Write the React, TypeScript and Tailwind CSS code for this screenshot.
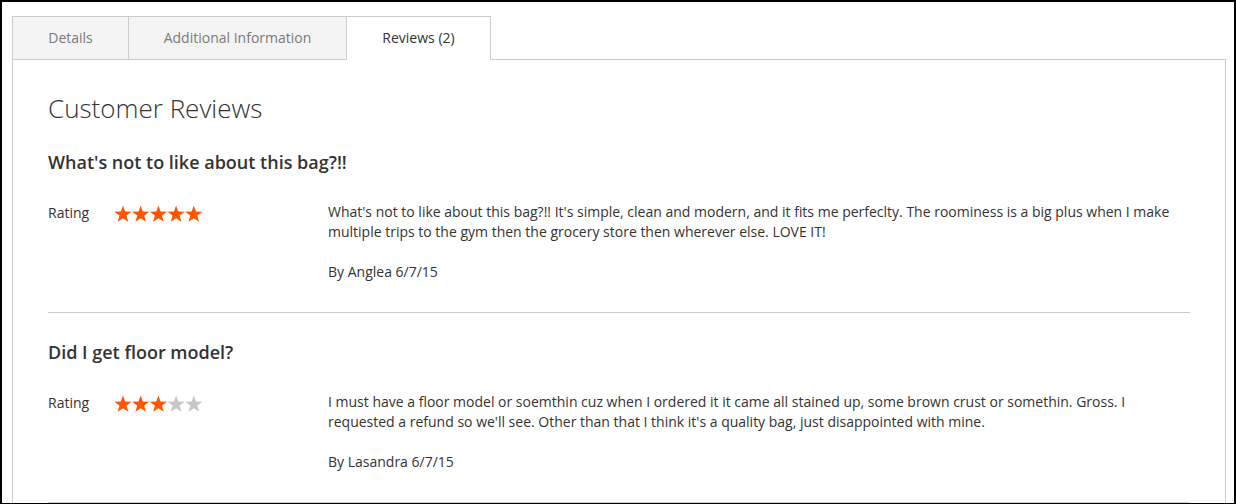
const font = "font-['Open_Sans','Liberation_Sans',sans-serif]";

const tabs = [
  { label: "Details", width: "w-[117px]", active: false },
  { label: "Additional Information", width: "w-[219px]", active: false },
  { label: "Reviews (2)", width: "w-[145px]", active: true },
];

const reviews = [
  {
    title: "What's not to like about this bag?!!",
    rating: 5,
    text: "What's not to like about this bag?!! It's simple, clean and modern, and it fits me perfeclty. The roominess is a big plus when I make multiple trips to the gym then the grocery store then wherever else. LOVE IT!",
    by: "By Anglea 6/7/15",
  },
  {
    title: "Did I get floor model?",
    rating: 3,
    text: "I must have a floor model or soemthin cuz when I ordered it it came all stained up, some brown crust or somethin. Gross. I requested a refund so we'll see. Other than that I think it's a quality bag, just disappointed with mine.",
    by: "By Lasandra 6/7/15",
  },
];

const STAR =
  "0,-8.5 1.998,-2.751 8.084,-2.627 3.234,1.051 4.996,6.877 0,3.4 -4.996,6.877 -3.234,1.051 -8.084,-2.627 -1.998,-2.751";

function Stars({ value }: { value: number }) {
  return (
    <svg width="90" height="17" viewBox="0 0 90 17" className="mt-[3px] block">
      {[0, 1, 2, 3, 4].map((i) => (
        <polygon
          key={i}
          points={STAR}
          transform={`translate(${9 + i * 17.7} 9.5) scale(1.07)`}
          fill={i < value ? "#ff5501" : "#c7c7c7"}
        />
      ))}
    </svg>
  );
}

export default function App() {
  return (
    <div
      className={`${font} w-[1236px] h-[504px] overflow-hidden bg-white border-t-2 border-l-2 border-r-2 border-b border-black pt-[14px] pl-[10px] text-[#333]`}
    >
      {/* tab titles */}
      <div className="flex relative z-10">
        {tabs.map((t, i) => (
          <div
            key={t.label}
            className={`${t.width} h-[44px] pb-[2px] flex items-center justify-center border border-[#cccccc] text-[14px] ${
              i > 0 ? "-ml-px" : ""
            } ${t.active ? "bg-white border-b-white text-[#333]" : "bg-[#f4f4f4] text-[#7a7a7a]"}`}
          >
            {t.label}
          </div>
        ))}
      </div>

      {/* panel */}
      <div className="w-[1214px] -mt-px border border-[#cccccc] px-[35px] pt-[35px] pb-[35px]">
        <h2 className="text-[26px] leading-[26px] font-light">Customer Reviews</h2>
        <div className="mt-[29px]">
          {reviews.map((r, idx) => (
            <div
              key={r.title}
              className={`border-b border-[#cccccc] pb-[30px] ${idx > 0 ? "pt-[27px]" : ""}`}
            >
              <div className="text-[18px] leading-[24px] font-semibold">{r.title}</div>
              <div className="flex mt-[28px] text-[14px] leading-[20px]">
                <div className="w-[280px] flex shrink-0">
                  <span className="w-[66px] mt-[1px]">Rating</span>
                  <Stars value={r.rating} />
                </div>
                <div className="w-[862px]">
                  <p>{r.text}</p>
                  <p className="mt-[20px]">{r.by}</p>
                </div>
              </div>
            </div>
          ))}
        </div>
      </div>
    </div>
  );
}
